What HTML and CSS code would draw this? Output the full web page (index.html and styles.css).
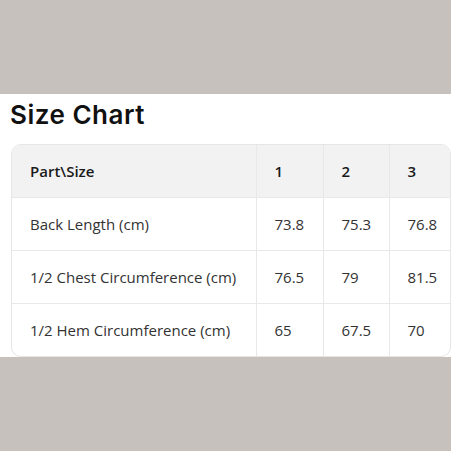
FILE: index.html
```html
<!DOCTYPE html>
<html>
<head>
<meta charset="utf-8">
<link rel="stylesheet" href="styles.css">
</head>
<body>
<div class="top"></div>
<section class="panel">
  <h2 class="title">Size Chart</h2>
  <div class="table-wrap">
    <table class="chart">
      <thead>
        <tr><th class="c1">Part\Size</th><th class="c2">1</th><th class="c3">2</th><th class="c4">3</th></tr>
      </thead>
      <tbody>
        <tr><td>Back Length (cm)</td><td>73.8</td><td>75.3</td><td>76.8</td></tr>
        <tr><td>1/2 Chest Circumference (cm)</td><td>76.5</td><td>79</td><td>81.5</td></tr>
        <tr><td>1/2 Hem Circumference (cm)</td><td>65</td><td>67.5</td><td>70</td></tr>
      </tbody>
    </table>
  </div>
</section>
</body>
</html>
```
FILE: styles.css
```css
html, body {
  margin: 0;
  padding: 0;
  background: #c6c1bc;
  width: 451px;
  height: 451px;
  overflow: hidden;
}
.top {
  height: 94px;
}
.panel {
  background: #ffffff;
  height: 263px;
  padding: 0 0 0 11px;
  box-sizing: border-box;
}
.title {
  margin: 0;
  padding-top: 1px;
  padding-bottom: 3px;
  margin-left: -1px;
  height: 50px;
  box-sizing: border-box;
  font-family: "Inter", "Noto Sans", sans-serif;
  font-weight: 600;
  font-size: 26px;
  line-height: 40px;
  color: #111;
  letter-spacing: 0.5px;
}
.table-wrap {
  width: 440px;
  border: 1px solid #e6e6e6;
  border-radius: 10px;
  overflow: hidden;
  box-sizing: border-box;
}
.chart {
  border-collapse: collapse;
  width: 100%;
  table-layout: fixed;
  font-family: "Open Sans", "Noto Sans", sans-serif;
  font-size: 15px;
  color: #333;
}
.chart th, .chart td {
  height: 53px;
  padding: 0 0 0 18px;
  text-align: left;
  border-right: 1px solid #e8e8e8;
  border-bottom: 1px solid #e8e8e8;
  box-sizing: border-box;
}
.chart tr > *:last-child { border-right: none; }
.chart tbody tr:last-child td { border-bottom: none; }
.chart thead th { height: 52px; }
.chart th {
  background: #f2f2f2;
  font-weight: 600;
  color: #1a1a1a;
}
.c1 { width: 244px; }
.c2 { width: 67px; }
.c3 { width: 66px; }
```
